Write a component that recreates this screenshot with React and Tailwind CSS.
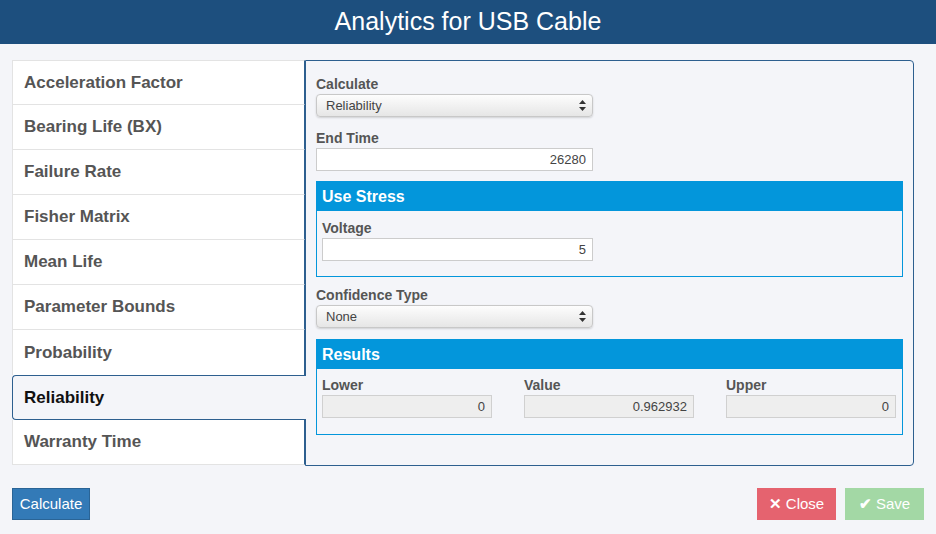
import React from "react";

const items = ["Acceleration Factor","Bearing Life (BX)","Failure Rate","Fisher Matrix","Mean Life","Parameter Bounds","Probability","Reliability","Warranty Time"];

function Select({ value }) {
  return (
    <div className="w-[277px] h-[23px] rounded-[4px] border border-[#c8c8c8] bg-gradient-to-b from-[#fdfdfd] to-[#e6e6e6] shadow-[0_1px_2px_rgba(0,0,0,0.15)] flex items-center justify-between pl-[9px] pr-[6px] text-[13px] text-[#444]">
      <span>{value}</span>
      <svg width="7" height="11" viewBox="0 0 7 11"><path d="M3.5 0L7 4H0z M3.5 11L0 7h7z" fill="#333"/></svg>
    </div>
  );
}
function Input({ value, w = "w-[277px]", ro }) {
  return (
    <div className={`${w} h-[23px] border ${ro ? "border-[#d0d0d0] bg-[#eeeeee]" : "border-[#cccccc] bg-white"} flex items-center justify-end pr-[6px] text-[13px] text-[#444]`}>{value}</div>
  );
}
const Label = ({ children }) => <div className="text-[14px] font-bold text-[#555] leading-[17px] mb-[1px]">{children}</div>;

export default function App() {
  return (
    <div className="w-[936px] h-[534px] bg-[#f4f5f9] flex flex-col" style={{ fontFamily: '"Liberation Sans", Arial, sans-serif' }}>
      <div className="h-[44px] bg-[#1d4f7e] flex items-center justify-center text-white text-[25px]">Analytics for USB Cable</div>
      <div className="flex mt-[16px] ml-[12px] h-[406px]">
        <div className="w-[293px] flex flex-col">
          {items.map((t, i) => {
            const active = t === "Reliability";
            return (
              <div key={t} className={`h-[45px] flex items-center pl-[11px] text-[17px] font-bold ${active ? "bg-[#f4f5f9] text-[#111] border border-r-0 border-[#2d5f8f] rounded-l-[4px] relative z-10 mr-[-1px]" : "bg-white text-[#555] border-x border-[#e3e3e3] " + (i === 0 ? "border-t " : "") + (i === 6 ? "border-b-0 " : "border-b ") + "border-r-[#2d5f8f] border-[#e3e3e3]"}`}>
                {t}
              </div>
            );
          })}
        </div>
        <div className="w-[609px] border border-[#2d5f8f] rounded-r-[4px] border-l-[#2d5f8f] px-[10px] pt-[15px]">
          <Label>Calculate</Label>
          <Select value="Reliability" />
          <div className="mt-[13px]"><Label>End Time</Label></div>
          <Input value="26280" />
          <div className="mt-[10px] border border-[#0396db] h-[96px]">
            <div className="h-[29px] bg-[#0396db] text-white font-bold text-[16px] flex items-center pl-[5px]">Use Stress</div>
            <div className="px-[5px] pt-[9px]"><Label>Voltage</Label><Input value="5" w="w-[271px]" /></div>
          </div>
          <div className="mt-[10px]"><Label>Confidence Type</Label></div>
          <Select value="None" />
          <div className="mt-[11px] border border-[#0396db] h-[96px]">
            <div className="h-[29px] bg-[#0396db] text-white font-bold text-[16px] flex items-center pl-[5px]">Results</div>
            <div className="px-[5px] pt-[8px] flex gap-[32px]">
              {[["Lower","0"],["Value","0.962932"],["Upper","0"]].map(([l, v]) => (
                <div key={l}><Label>{l}</Label><Input value={v} w="w-[170px]" ro /></div>
              ))}
            </div>
          </div>
        </div>
      </div>
      <div className="flex items-center mt-[22px] px-[12px]">
        <div className="w-[78px] h-[32px] bg-[#337ab7] border border-[#2a6496] text-white text-[15px] flex items-center justify-center">Calculate</div>
        <div className="flex-1" />
        <div className="w-[79px] h-[32px] bg-[#e5636f] text-white text-[15px] flex items-center justify-center gap-[4px]"><span className="font-bold">✕</span>Close</div>
        <div className="w-[79px] h-[32px] bg-[#a3d8a5] text-white text-[15px] flex items-center justify-center gap-[4px] ml-[9px]"><span className="font-bold">✔</span>Save</div>
      </div>
    </div>
  );
}
